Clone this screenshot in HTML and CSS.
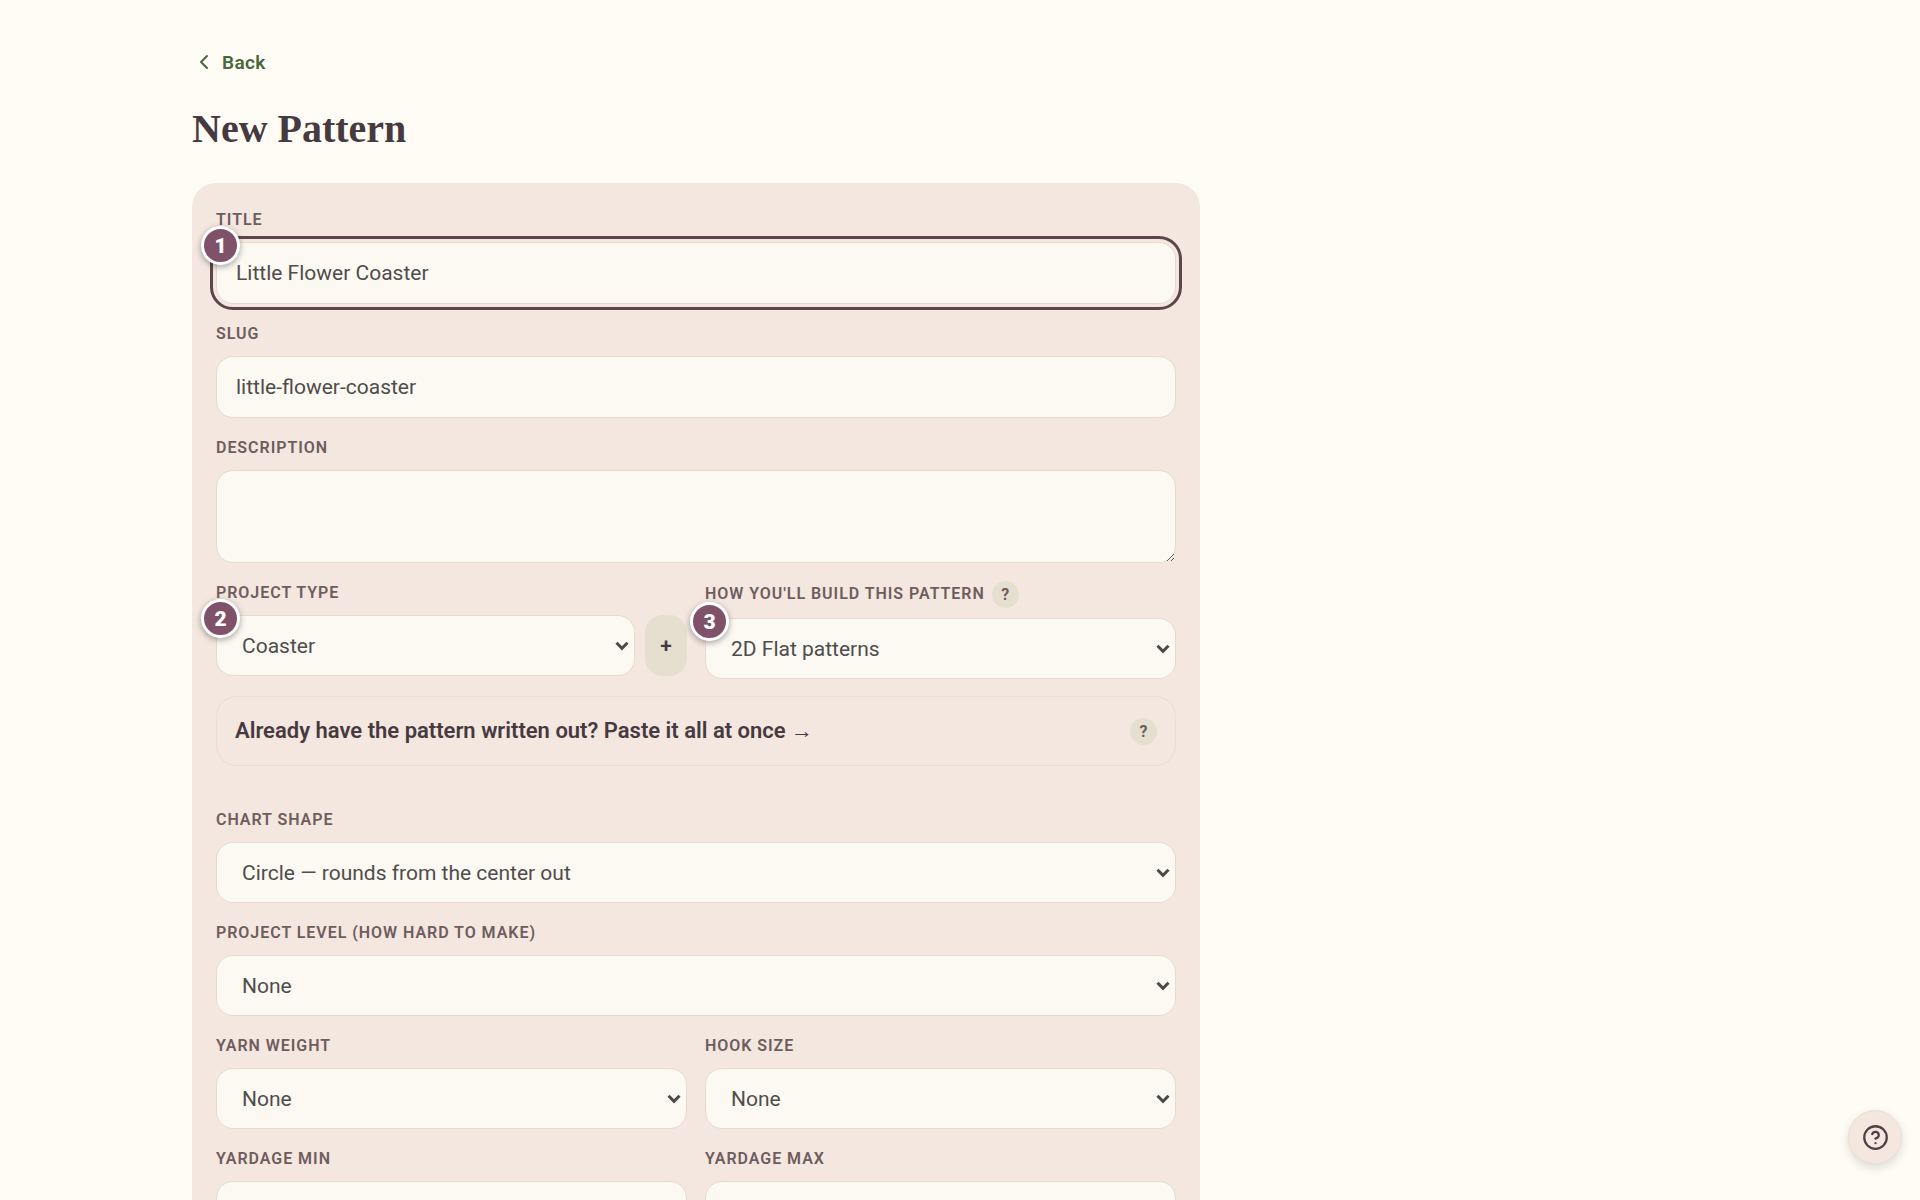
FILE: index.html
```html
<!DOCTYPE html>
<html lang="en">
<head>
  <meta charset="UTF-8">
  <meta name="viewport" content="width=device-width, initial-scale=1.0">
  <title>New Pattern</title>
  <link rel="stylesheet" href="styles.css">
</head>
<body>
  <main class="page">
    <a class="back" href="#">
      <svg class="back-icon" viewBox="0 0 24 24" aria-hidden="true"><path d="M15 6 9 12l6 6"/></svg>
      Back
    </a>
    <h1>New Pattern</h1>

    <form class="card">
      <div class="field">
        <div class="label-row"><label for="title">Title</label></div>
        <div class="control">
          <input class="focused" id="title" type="text" value="Little Flower Coaster">
          <span class="step">1</span>
        </div>
      </div>
      <div class="field">
        <div class="label-row"><label for="slug">Slug</label></div>
        <input id="slug" type="text" value="little-flower-coaster">
      </div>
      <div class="field">
        <div class="label-row"><label for="description">Description</label></div>
        <textarea id="description"></textarea>
      </div>

      <div class="columns">
        <div class="field">
          <div class="label-row"><label for="type">Project type</label></div>
          <div class="control with-add">
            <select id="type"><option>Coaster</option></select>
            <button class="add" type="button" aria-label="Add project type">+</button>
            <span class="step">2</span>
          </div>
        </div>
        <div class="field">
          <div class="label-row label-row-help">
            <label for="build">How you'll build this pattern</label>
            <button class="help" type="button">?</button>
          </div>
          <div class="control">
            <select id="build"><option>2D Flat patterns</option></select>
            <span class="step">3</span>
          </div>
        </div>
      </div>

      <div class="paste">
        <a class="paste-link" href="#">Already have the pattern written out? Paste it all at once <span class="arrow">→</span></a>
        <button class="help" type="button">?</button>
      </div>

      <div class="field">
        <div class="label-row"><label for="shape">Chart shape</label></div>
        <select id="shape"><option>Circle — rounds from the center out</option></select>
      </div>
      <div class="field">
        <div class="label-row"><label for="level">Project level (how hard to make)</label></div>
        <select id="level"><option>None</option></select>
      </div>
      <div class="columns">
        <div class="field">
          <div class="label-row"><label for="yarn">Yarn weight</label></div>
          <select id="yarn"><option>None</option></select>
        </div>
        <div class="field">
          <div class="label-row"><label for="hook">Hook size</label></div>
          <select id="hook"><option>None</option></select>
        </div>
      </div>
      <div class="columns">
        <div class="field">
          <div class="label-row"><label for="yardage-min">Yardage min</label></div>
          <input id="yardage-min" type="text">
        </div>
        <div class="field">
          <div class="label-row"><label for="yardage-max">Yardage max</label></div>
          <input id="yardage-max" type="text">
        </div>
      </div>
    </form>
  </main>

  <button class="fab" type="button" aria-label="Help">
    <svg viewBox="0 0 24 24" aria-hidden="true">
      <circle cx="12" cy="12" r="10"/>
      <path d="M9.090 9a3 3 0 0 1 5.830 1c0 2-3 3-3 3"/>
      <path d="M12 17h.01"/>
    </svg>
  </button>
</body>
</html>
```
FILE: styles.css
```css
* {
  box-sizing: border-box;
}
body {
  margin: 0;
  background: #fffcf5;
  color: #504c4c;
  font-family: Roboto, "Liberation Sans", sans-serif;
  font-size: 21px;
}
button, input, select, textarea {
  font: inherit;
  color: inherit;
}
.page {
  max-width: 1536px;
  margin: 0 auto;
  padding: 41px 0 48px;
}
.back {
  display: inline-flex;
  align-items: center;
  gap: 6px;
  height: 42px;
  color: #47673c;
  font-size: 19px;
  font-weight: 600;
  letter-spacing: 0.02em;
  text-decoration: none;
}
.back-icon {
  width: 24px;
  height: 24px;
  fill: none;
  stroke: currentColor;
  stroke-width: 2;
  stroke-linecap: round;
  stroke-linejoin: round;
}
h1 {
  margin: 22px 0 30px;
  color: #463a40;
  font-family: "Liberation Serif", serif;
  font-size: 40px;
  font-weight: 700;
  line-height: 48px;
}
.card {
  display: flex;
  flex-direction: column;
  gap: 17px;
  max-width: 1008px;
  padding: 24px;
  border-radius: 24px;
  background: #f3e7df;
}
.columns {
  display: grid;
  grid-template-columns: 1fr 1fr;
  gap: 18px;
}
.label-row {
  display: flex;
  align-items: center;
  gap: 7px;
  height: 26px;
  margin-bottom: 9px;
}
.label-row-help {
  height: 28px;
  margin-bottom: 10px;
}
label {
  color: #6e5c5e;
  font-size: 16px;
  font-weight: 600;
  line-height: 24px;
  letter-spacing: 0.06em;
  text-transform: uppercase;
}
input, select, textarea {
  display: block;
  width: 100%;
  height: 62px;
  padding: 0 19px;
  border: 1px solid #e5dccf;
  border-radius: 17px;
  background: #fbf9f2;
}
.focused {
  outline: 3px solid #5c464c;
  outline-offset: 3px;
}
textarea {
  height: 93px;
  padding: 14px 19px;
  resize: vertical;
}
select {
  height: 61px;
  padding: 0 36px 0 25px;
  appearance: none;
  background: #fbf9f2 url("data:image/svg+xml,%3Csvg xmlns='http://www.w3.org/2000/svg' width='14' height='10' viewBox='0 0 14 10'%3E%3Cpath d='M1.500 1.800 7 7.300l5.500-5.500' fill='none' stroke='%234a4a4a' stroke-width='3'/%3E%3C/svg%3E") no-repeat right 5px center;
}
.control {
  position: relative;
}
.with-add {
  display: flex;
  gap: 10px;
}
.add {
  flex: none;
  width: 42px;
  padding: 0;
  border: 0;
  border-radius: 18px;
  background: #e5dfcf;
  color: #463a40;
  font-weight: 600;
}
.step {
  position: absolute;
  top: -16px;
  left: -15px;
  width: 39px;
  height: 39px;
  border: 3px solid #fff;
  border-radius: 50%;
  background: #80526a;
  box-shadow: 0 2px 6px rgba(0, 0, 0, 0.35);
  color: #fff;
  font-size: 21px;
  font-weight: 900;
  line-height: 34px;
  text-align: center;
}
.help {
  flex: none;
  width: 27px;
  height: 27px;
  padding: 0;
  border: 0;
  border-radius: 50%;
  background: #e5dfcf;
  color: #6e5c5e;
  font-size: 16px;
  font-weight: 700;
}
.paste {
  display: flex;
  align-items: center;
  justify-content: space-between;
  height: 70px;
  margin-bottom: 24px;
  padding: 0 18px;
  border: 1px solid #e8dcd3;
  border-radius: 20px;
}
.paste-link {
  color: #463a40;
  font-size: 22px;
  font-weight: 600;
  text-decoration: none;
}
.arrow {
  font-family: "Liberation Serif", serif;
  font-weight: 400;
}
.fab {
  position: fixed;
  right: 18px;
  bottom: 36px;
  display: grid;
  place-items: center;
  width: 54px;
  height: 54px;
  padding: 0;
  border: 1px solid #e9dfd4;
  border-radius: 50%;
  background: #f3e7df;
  box-shadow: 0 4px 10px rgba(70, 58, 64, 0.18);
  color: #523f46;
}
.fab svg {
  width: 27px;
  height: 27px;
  fill: none;
  stroke: currentColor;
  stroke-width: 2;
  stroke-linecap: round;
  stroke-linejoin: round;
}
```
